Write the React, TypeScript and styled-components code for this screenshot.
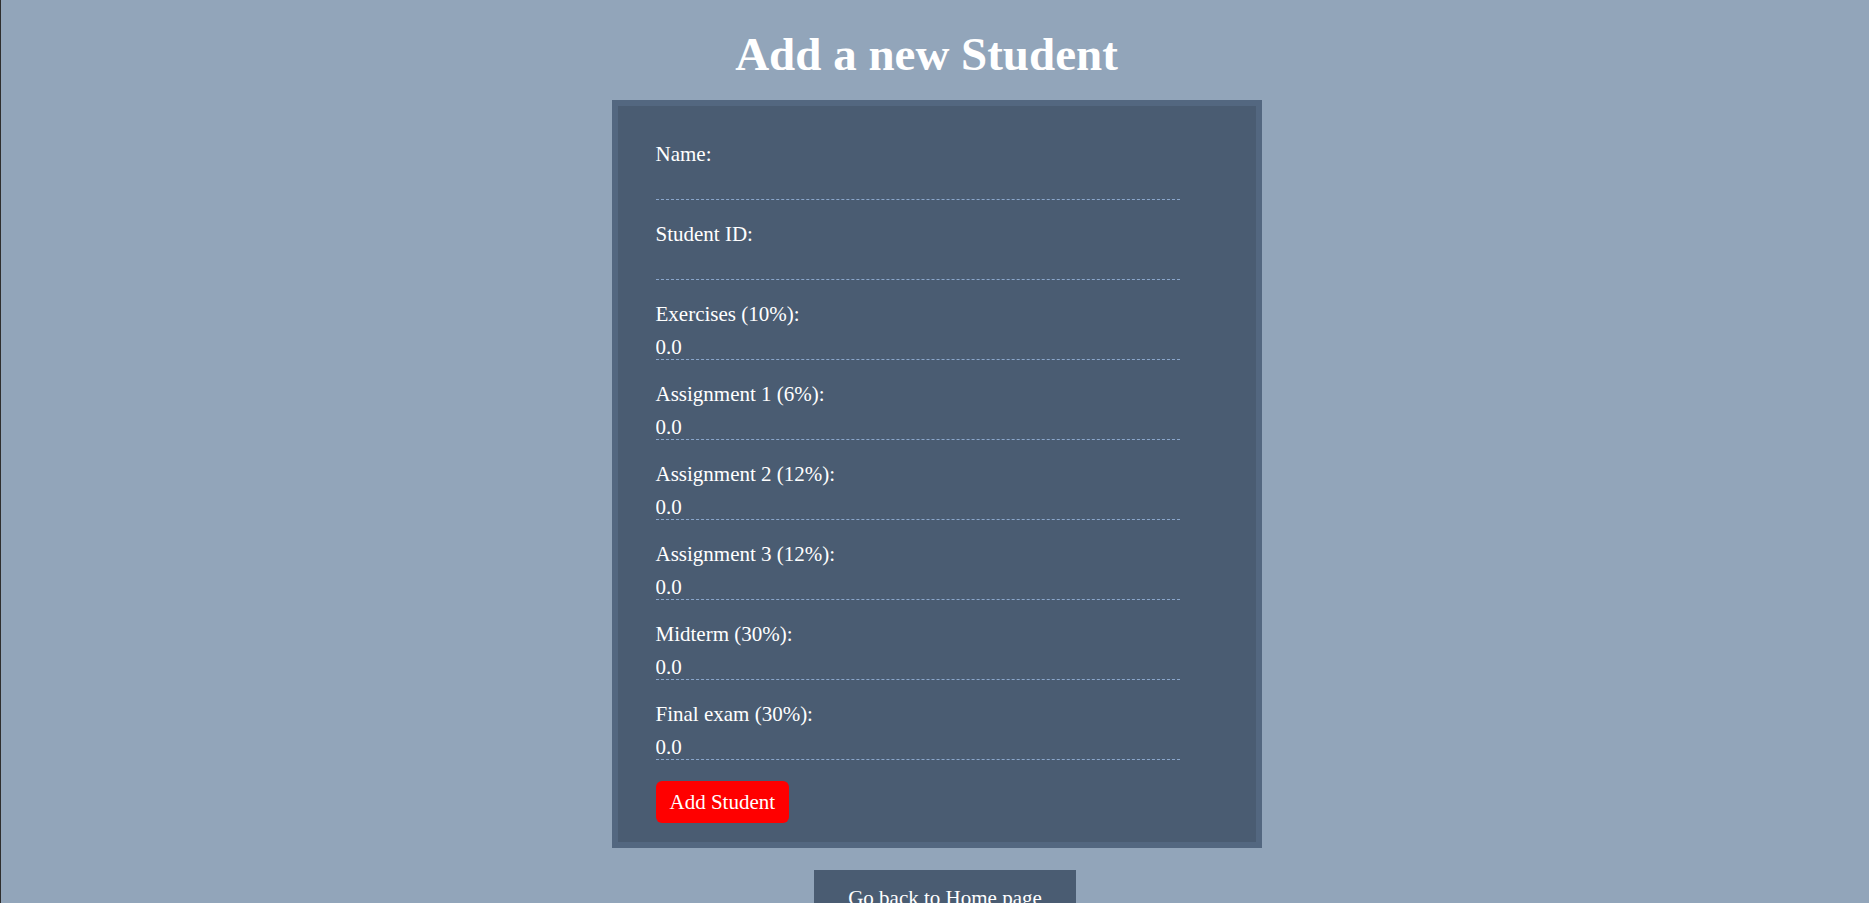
import { useState } from 'react';
import styled, { createGlobalStyle } from 'styled-components';

const GlobalStyle = createGlobalStyle`
  html {
    border-left: 1px solid #2e2e2e;
    background-color: #92a5ba;
  }
  body {
    margin: 0;
    background-color: #92a5ba;
    font-family: 'Liberation Serif', 'Times New Roman', serif;
    color: #fff;
  }
`;

// padding-right keeps the centre where the reference had its scrollbar
const Page = styled.div`
  display: flex;
  flex-direction: column;
  align-items: center;
  padding: 31px 17px 20px 0;
`;

const Title = styled.h1`
  margin: 0;
  font-size: 47px;
  line-height: 47px;
  font-weight: 700;
  color: #fff;
`;

const Panel = styled.form`
  box-sizing: border-box;
  width: 650px;
  margin: 22px 0 0 20px;
  padding: 37px 38px 19px;
  border: 6px solid #536780;
  background-color: #4a5c72;
  display: flex;
  flex-direction: column;
  align-items: flex-start;
`;

const Field = styled.div`
  display: flex;
  flex-direction: column;
  & + & {
    margin-top: 23px;
  }
`;

const Label = styled.label`
  font-size: 21px;
  line-height: 23px;
  color: #fff;
`;

const Input = styled.input`
  box-sizing: border-box;
  width: 524px;
  height: 24px;
  margin: 10px 0 0;
  padding: 0;
  border: none;
  border-bottom: 1px dashed #8aa6cb;
  background: transparent;
  color: #fff;
  font-family: inherit;
  font-size: 21px;
  line-height: 23px;
  outline: none;
`;

const SubmitButton = styled.button`
  margin-top: 21px;
  height: 42px;
  padding: 0 14px;
  border: none;
  border-radius: 6px;
  background-color: #ff0000;
  color: #fff;
  font-family: inherit;
  font-size: 21px;
  cursor: pointer;
`;

const BackButton = styled.button`
  margin: 22px 0 0 37px;
  padding: 17px 34px;
  border: none;
  background-color: #4a5c72;
  color: #fff;
  font-family: inherit;
  font-size: 21px;
  line-height: 23px;
  cursor: pointer;
`;

const fields = [
  { key: 'name', label: 'Name:', initial: '' },
  { key: 'studentId', label: 'Student ID:', initial: '' },
  { key: 'exercises', label: 'Exercises (10%):', initial: '0.0' },
  { key: 'a1', label: 'Assignment 1 (6%):', initial: '0.0' },
  { key: 'a2', label: 'Assignment 2 (12%):', initial: '0.0' },
  { key: 'a3', label: 'Assignment 3 (12%):', initial: '0.0' },
  { key: 'midterm', label: 'Midterm (30%):', initial: '0.0' },
  { key: 'final', label: 'Final exam (30%):', initial: '0.0' },
];

function App() {
  const [values, setValues] = useState<Record<string, string>>(
    Object.fromEntries(fields.map((f) => [f.key, f.initial]))
  );

  return (
    <>
      <GlobalStyle />
      <Page>
        <Title>Add a new Student</Title>
        <Panel onSubmit={(e) => e.preventDefault()}>
          {fields.map((f) => (
            <Field key={f.key}>
              <Label htmlFor={f.key}>{f.label}</Label>
              <Input
                id={f.key}
                value={values[f.key]}
                onChange={(e) => setValues({ ...values, [f.key]: e.target.value })}
              />
            </Field>
          ))}
          <SubmitButton type="submit">Add Student</SubmitButton>
        </Panel>
        <BackButton type="button">Go back to Home page</BackButton>
      </Page>
    </>
  );
}

export default App;
